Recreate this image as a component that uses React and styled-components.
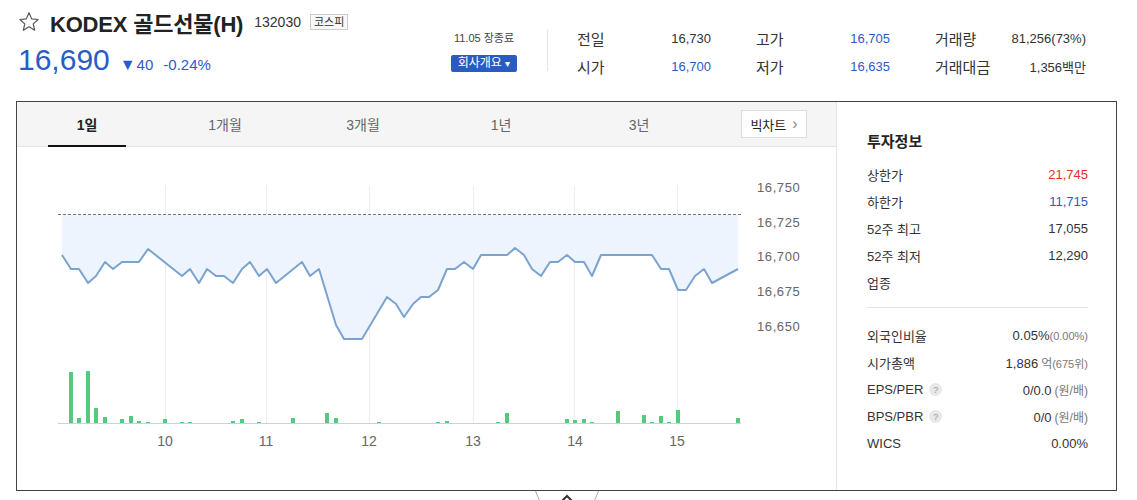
import React from "react";
import styled, { createGlobalStyle } from "styled-components";

const GlobalStyle = createGlobalStyle`
  body {
    margin: 0;
    font-family: "Liberation Sans", "Noto Sans CJK KR", sans-serif;
    color: #333;
    background: #fff;
  }
`;

const BLUE = "#2a5cc6";
const RED = "#e0312f";

const line = [
  [62, 255], [71, 269], [79, 269], [88, 283], [96, 276], [105, 262], [113, 269], [122, 262],
  [139, 262], [148, 249], [182, 276], [190, 269], [199, 283], [207, 269], [216, 276], [224, 276],
  [233, 283], [242, 269], [250, 262], [259, 276], [267, 269], [276, 283], [302, 262], [310, 276],
  [319, 269], [336, 325], [344, 339], [362, 339], [387, 297], [396, 304], [404, 317], [413, 304],
  [421, 297], [429, 297], [438, 290], [447, 269], [455, 269], [464, 262], [473, 269], [481, 255],
  [507, 255], [515, 248], [524, 255], [532, 269], [541, 276], [550, 262], [558, 262], [567, 255],
  [575, 262], [584, 262], [592, 276], [601, 255], [652, 255], [661, 269], [669, 269], [678, 290],
  [686, 290], [695, 276], [704, 269], [712, 283], [738, 269],
];

const bars = [
  [69, 51], [77, 5], [86, 52], [94, 15], [103, 6], [120, 4], [129, 7], [137, 2], [146, 1],
  [163, 4], [180, 1], [188, 1], [231, 2], [240, 4], [257, 1], [291, 5], [325, 10], [334, 5],
  [377, 1], [436, 1], [445, 2], [496, 1], [505, 10], [565, 4], [573, 3], [582, 4], [590, 1],
  [616, 12], [642, 8], [650, 1], [659, 7], [667, 1], [676, 13], [736, 5],
];

const yLabels = [
  ["16,750", 187], ["16,725", 222], ["16,700", 256], ["16,675", 291], ["16,650", 326],
];
const xLabels = [["10", 165], ["11", 266], ["12", 369], ["13", 473], ["14", 575], ["15", 677]];

const tabs = ["1일", "1개월", "3개월", "1년", "3년"];

const stats = [
  ["전일", "16,730", false],
  ["고가", "16,705", true],
  ["거래량", "81,256(73%)", false],
  ["시가", "16,700", true],
  ["저가", "16,635", true],
  ["거래대금", "1,356백만", false],
];

const Star = () => (
  <svg width="22" height="22" viewBox="0 0 24 24">
    <polygon
      points="12,2 14.9,8.6 22,9.3 16.6,14 18.2,21 12,17.3 5.8,21 7.4,14 2,9.3 9.1,8.6"
      fill="none"
      stroke="#555"
      strokeWidth="1.3"
      strokeLinejoin="round"
    />
  </svg>
);

const Chart = () => {
  const pts = line.map((p) => p.join(",")).join(" ");
  const area = `62,214 ${pts} 738,214`;
  return (
    <svg width="819" height="342" viewBox="17 147 819 342">
      {[165.5, 266.5, 369.5, 473.5, 574.5, 677.5].map((x) => (
        <line key={x} x1={x} x2={x} y1="186" y2="423" stroke="#eeeeee" strokeWidth="1" />
      ))}
      <polygon points={area} fill="#edf4fd" />
      <line x1="58" x2="741" y1="214.5" y2="214.5" stroke="#777" strokeDasharray="3,2" strokeWidth="1" />
      <polyline points={pts} fill="none" stroke="#7ba3d0" strokeWidth="2" strokeLinejoin="round" />
      {bars.map(([x, h]) => (
        <rect key={x} x={x} y={423 - h} width="4" height={h} fill="#55c97e" />
      ))}
      <line x1="58" x2="741" y1="423.5" y2="423.5" stroke="#c9d3dc" strokeWidth="1" />
      {yLabels.map(([t, y]) => (
        <text key={t} x="757" y={y + 5} fontSize="13" fill="#666" letterSpacing="0.6"
          fontFamily="Liberation Sans, sans-serif">{t}</text>
      ))}
      {xLabels.map(([t, x]) => (
        <text key={t} x={x} y="446" fontSize="14" fill="#666" textAnchor="middle"
          fontFamily="Liberation Sans, sans-serif">{t}</text>
      ))}
    </svg>
  );
};

const Help = () => <HelpIcon>?</HelpIcon>;

export default function App() {
  return (
    <>
      <GlobalStyle />
      <Page>
        <Header>
          <Summary>
            <TitleRow>
              <Star />
              <Title>KODEX 골드선물(H)</Title>
              <Code>132030</Code>
              <Market>코스피</Market>
            </TitleRow>
            <PriceRow>
              <Price>16,690</Price>
              <Change>
                <Tri>▼</Tri>40
              </Change>
              <Change>-0.24%</Change>
            </PriceRow>
          </Summary>
          <Status>
            <DateText>11.05 장종료</DateText>
            <CompanyButton>
              회사개요 <Caret>▾</Caret>
            </CompanyButton>
          </Status>
          <VDivider />
          <StatsGrid>
            {stats.map(([label, value, blue]) => (
              <Stat key={label}>
                <StatLabel>{label}</StatLabel>
                <StatValue $blue={blue}>{value}</StatValue>
              </Stat>
            ))}
          </StatsGrid>
        </Header>

        <Box>
          <ChartPanel>
            <TabBar>
              {tabs.map((t, i) => (
                <Tab key={t} $active={i === 0}>{t}</Tab>
              ))}
              <BigChart>
                빅차트 <Chevron>›</Chevron>
              </BigChart>
            </TabBar>
            <Chart />
          </ChartPanel>

          <InfoPanel>
            <InfoTitle>투자정보</InfoTitle>
            <InfoList>
              <InfoRow><span>상한가</span><InfoValue $color={RED}>21,745</InfoValue></InfoRow>
              <InfoRow><span>하한가</span><InfoValue $color={BLUE}>11,715</InfoValue></InfoRow>
              <InfoRow><span>52주 최고</span><InfoValue>17,055</InfoValue></InfoRow>
              <InfoRow><span>52주 최저</span><InfoValue>12,290</InfoValue></InfoRow>
              <InfoRow><span>업종</span><InfoValue></InfoValue></InfoRow>
            </InfoList>
            <HDivider />
            <InfoList>
              <InfoRow>
                <span>외국인비율</span>
                <InfoValue>0.05%<Sub>(0.00%)</Sub></InfoValue>
              </InfoRow>
              <InfoRow>
                <span>시가총액</span>
                <InfoValue>1,886 <Unit>억</Unit><Sub>(675위)</Sub></InfoValue>
              </InfoRow>
              <InfoRow>
                <span>EPS/PER <Help /></span>
                <InfoValue>0/0.0 <Unit>(원/배)</Unit></InfoValue>
              </InfoRow>
              <InfoRow>
                <span>BPS/PBR <Help /></span>
                <InfoValue>0/0 <Unit>(원/배)</Unit></InfoValue>
              </InfoRow>
              <InfoRow>
                <span>WICS</span>
                <InfoValue>0.00%</InfoValue>
              </InfoRow>
            </InfoList>
          </InfoPanel>

          <Handle>
            <svg width="66" height="12" viewBox="0 0 66 12">
              <line x1="1.5" y1="0" x2="6.5" y2="12" stroke="#aaa" strokeWidth="1" />
              <line x1="64.5" y1="0" x2="59.5" y2="12" stroke="#aaa" strokeWidth="1" />
              <polyline points="28,10 33,5 38,10" fill="none" stroke="#333" strokeWidth="2" />
            </svg>
          </Handle>
        </Box>
      </Page>
    </>
  );
}

const Page = styled.div`
  width: 1101px;
  padding: 0 0 30px 16px;
`;

const Header = styled.div`
  height: 101px;
  display: flex;
  align-items: flex-start;
  padding: 0 31px 0 2px;
  box-sizing: border-box;
`;

const Summary = styled.div`
  flex: 1;
  padding-top: 11px;
`;

const TitleRow = styled.div`
  display: flex;
  align-items: center;
  height: 22px;
`;

const Title = styled.h1`
  margin: 0 0 0 10px;
  font-size: 22px;
  font-weight: 700;
  color: #222;
  letter-spacing: -0.2px;
`;

const Code = styled.span`
  margin-left: 11px;
  font-size: 14px;
  color: #333;
`;

const Market = styled.span`
  margin-left: 9px;
  font-size: 11px;
  line-height: 14px;
  padding: 0 3px;
  border: 1px solid #ccc;
  background: #f8f8f8;
  color: #333;
`;

const PriceRow = styled.div`
  display: flex;
  align-items: baseline;
  margin-top: 10px;
  color: ${BLUE};
`;

const Price = styled.span`
  font-size: 30px;
  line-height: 34px;
  margin-right: 10px;
`;

const Change = styled.span`
  font-size: 15px;
  margin-right: 10px;
`;

const Tri = styled.span`
  font-size: 16px;
  margin-right: 1px;
`;

const Status = styled.div`
  width: 66px;
  padding-top: 30px;
  display: flex;
  flex-direction: column;
  align-items: center;
`;

const DateText = styled.div`
  font-size: 11px;
  line-height: 16px;
  color: #444;
  white-space: nowrap;
`;

const CompanyButton = styled.button`
  margin-top: 9px;
  width: 66px;
  height: 17px;
  padding: 0;
  border: 0;
  border-radius: 2px;
  background: #2a5cbf;
  color: #fff;
  font-family: inherit;
  font-size: 12px;
  line-height: 17px;
  white-space: nowrap;
`;

const Caret = styled.span`
  font-size: 10px;
`;

const VDivider = styled.div`
  width: 1px;
  height: 41px;
  margin: 30px 29px 0 30px;
  background: #e5e5e5;
`;

const StatsGrid = styled.div`
  padding-top: 28px;
  display: grid;
  grid-template-columns: 134px 134px 151px;
  column-gap: 45px;
  row-gap: 8px;
`;

const Stat = styled.div`
  display: flex;
  justify-content: space-between;
  align-items: center;
  height: 20px;
`;

const StatLabel = styled.span`
  font-size: 15px;
  color: #333;
`;

const StatValue = styled.span`
  font-size: 13px;
  color: ${(p) => (p.$blue ? BLUE : "#333")};
`;

const Box = styled.div`
  position: relative;
  display: flex;
  height: 390px;
  box-sizing: border-box;
  border: 1px solid #444;
`;

const ChartPanel = styled.div`
  width: 820px;
  box-sizing: border-box;
  border-right: 1px solid #e5e5e5;
  display: flex;
  flex-direction: column;
`;

const TabBar = styled.div`
  height: 45px;
  box-sizing: border-box;
  display: flex;
  align-items: stretch;
  padding-left: 1px;
  background: #f5f5f5;
  border-bottom: 1px solid #e5e5e5;
`;

const Tab = styled.div`
  width: 138px;
  display: flex;
  align-items: center;
  justify-content: center;
  position: relative;
  font-size: 14px;
  font-weight: ${(p) => (p.$active ? 700 : 400)};
  color: ${(p) => (p.$active ? "#222" : "#666")};
  &::after {
    content: "";
    display: ${(p) => (p.$active ? "block" : "none")};
    position: absolute;
    left: 30px;
    right: 30px;
    bottom: -1px;
    height: 2px;
    background: #111;
  }
`;

const BigChart = styled.div`
  margin: 8px 29px 0 auto;
  width: 66px;
  height: 28px;
  box-sizing: border-box;
  border: 1px solid #ddd;
  background: #fff;
  display: flex;
  align-items: center;
  justify-content: center;
  gap: 6px;
  font-size: 13px;
  color: #222;
`;

const Chevron = styled.span`
  font-size: 16px;
  color: #888;
  line-height: 1;
`;

const InfoPanel = styled.div`
  flex: 1;
  padding: 30px 28px 0 30px;
`;

const InfoTitle = styled.div`
  font-size: 15px;
  font-weight: 700;
  line-height: 20px;
  color: #222;
`;

const InfoList = styled.div`
  margin-top: 9px;
  &:last-child {
    margin-top: 14px;
  }
`;

const InfoRow = styled.div`
  display: flex;
  justify-content: space-between;
  align-items: center;
  height: 27px;
  font-size: 13px;
  color: #333;
  span {
    display: inline-flex;
    align-items: center;
  }
`;

const InfoValue = styled.div`
  color: ${(p) => p.$color || "#333"};
  display: flex;
  align-items: baseline;
`;

const Sub = styled.small`
  font-size: 11px;
  color: #777;
`;

const Unit = styled.small`
  font-size: 12px;
  color: #777;
  margin-left: 3px;
`;

const HelpIcon = styled.i`
  display: inline-flex;
  align-items: center;
  justify-content: center;
  width: 13px;
  height: 13px;
  margin-left: 6px;
  border-radius: 50%;
  background: #e8e8e8;
  color: #999;
  font-size: 9px;
  font-style: normal;
`;

const HDivider = styled.div`
  margin-top: 11px;
  height: 1px;
  background: #e5e5e5;
`;

const Handle = styled.div`
  position: absolute;
  left: 517px;
  bottom: -13px;
  height: 12px;
  line-height: 0;
  z-index: 2;
`;
